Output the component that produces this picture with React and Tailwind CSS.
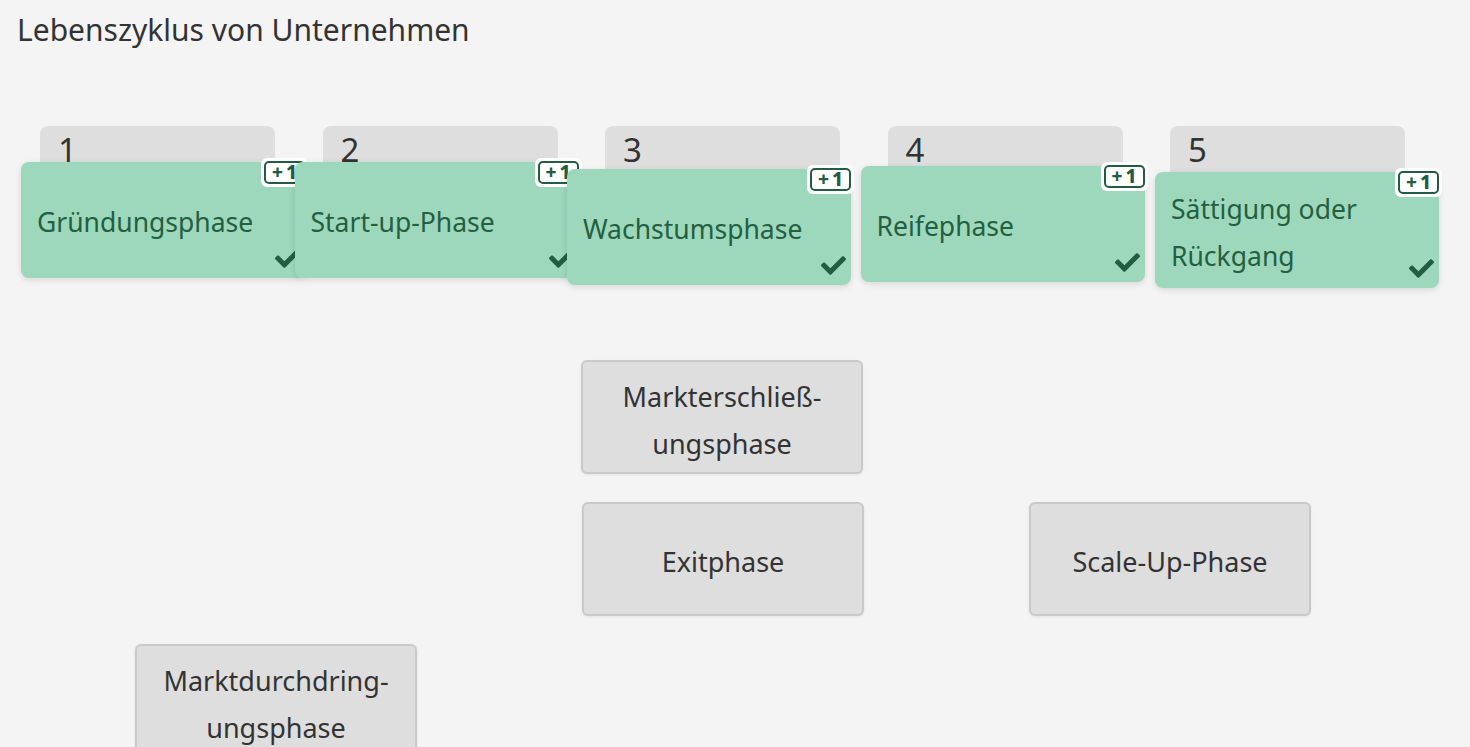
import { FaCheck } from 'react-icons/fa';

const slots = [
  { n: 1, label: 'Gründungsphase', pos: 'left-[-19px] top-[36px]' },
  { n: 2, label: 'Start-up-Phase', pos: 'left-[-28px] top-[36px]' },
  { n: 3, label: 'Wachstumsphase', pos: 'left-[-38px] top-[43px]' },
  { n: 4, label: 'Reifephase', pos: 'left-[-27px] top-[40px]' },
  { n: 5, label: 'Sättigung oder Rückgang', pos: 'left-[-15px] top-[46px]' },
];

const Badge = () => (
  <div className="absolute right-[-3px] top-[-4px] rounded-md bg-white p-[3px]">
    <div className="flex h-[23px] items-center gap-[3px] rounded-[5px] border-2 border-[#235d41] px-[6px] text-[19px] font-extrabold leading-none text-[#235d41]">
      <span>+</span>
      <span>1</span>
    </div>
  </div>
);

const PlacedCard = ({ label, pos }) => (
  <div
    className={`absolute ${pos} z-10 flex h-[116px] w-[284px] items-center rounded-lg bg-[#9dd8bc] px-4 pt-[5px] text-[26.5px] leading-[47px] text-[#245f41] shadow-[0_2px_6px_rgba(0,0,0,0.12)]`}
  >
    <span className="pr-6">{label}</span>
    <Badge />
    <FaCheck className="absolute bottom-[7px] right-[4px] h-[25px] w-[27px] text-[#235d41]" />
  </div>
);

const Chip = ({ children, className = '' }) => (
  <div
    className={`flex h-[114px] w-[282px] items-center justify-center rounded-md border-2 border-[#c9c9c9] bg-[#dedede] px-4 pt-[5px] text-center text-[27px] leading-[47px] text-[#333] shadow-[0_1px_3px_rgba(0,0,0,0.08)] ${className}`}
  >
    {children}
  </div>
);

export default function App() {
  return (
    <div
      className="min-h-screen overflow-hidden bg-[#f4f4f4] text-[#333]"
      style={{ fontFamily: '"Noto Sans", "Open Sans", sans-serif' }}
    >
      <h1 className="pl-[17px] pt-[8px] text-[30px] font-normal leading-[44px] text-[#333]">
        Lebenszyklus von Unternehmen
      </h1>

      <div className="mt-[74px] flex gap-[47.5px] pl-[40px]">
        {slots.map((s) => (
          <div key={s.n} className="relative h-[161px] w-[235px]">
            <div className="h-[60px] rounded-t-lg bg-[#dedede] pl-[18px] pt-[2px] text-[33px] leading-[44px] text-[#333]">
              {s.n}
            </div>
            <PlacedCard label={s.label} pos={s.pos} />
          </div>
        ))}
      </div>

      <div className="mt-[73px] grid grid-cols-[282px_282px_282px] grid-rows-[114px_114px_114px] gap-x-[165px] gap-y-[28px] pl-[135px]">
        <Chip className="col-start-2 row-start-1 -translate-x-px">
          Markterschließ-<br />ungsphase
        </Chip>
        <Chip className="col-start-2 row-start-2">Exitphase</Chip>
        <Chip className="col-start-3 row-start-2">Scale-Up-Phase</Chip>
        <Chip className="col-start-1 row-start-3">
          Marktdurchdring-<br />ungsphase
        </Chip>
      </div>
    </div>
  );
}
